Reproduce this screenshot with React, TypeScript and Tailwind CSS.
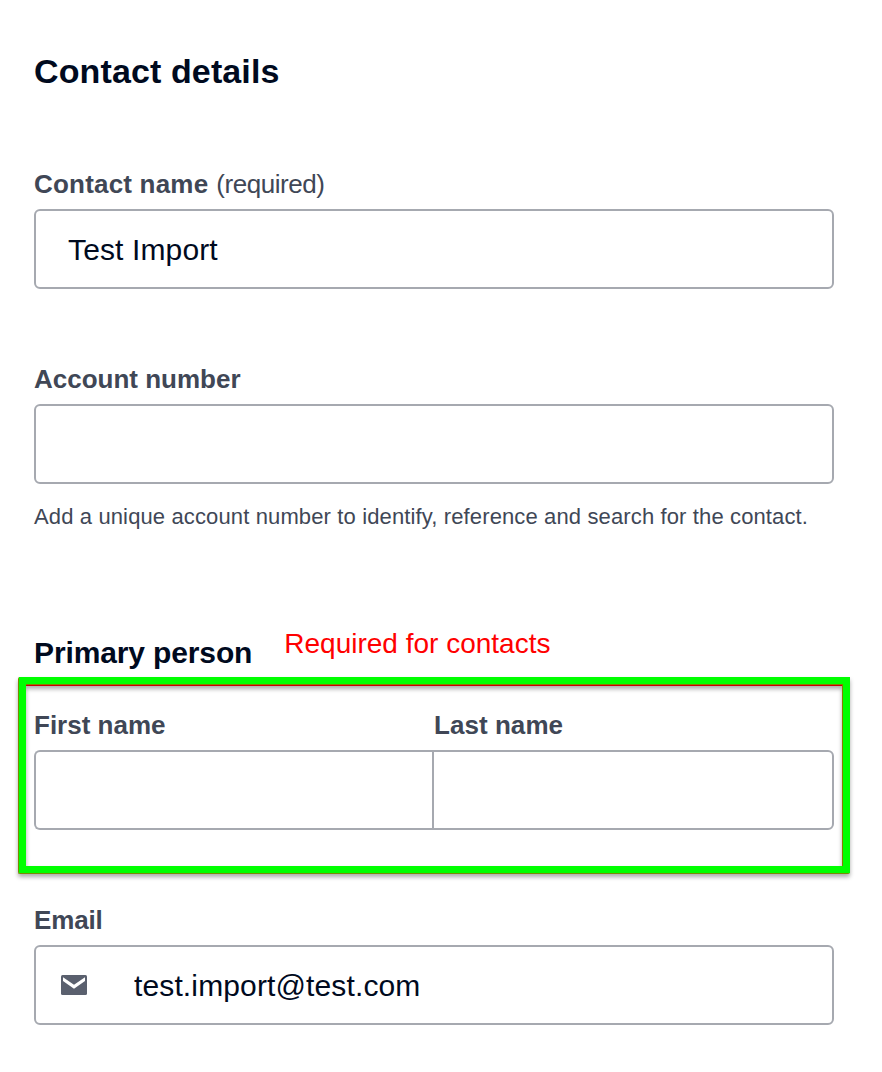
import type { ReactNode } from "react";
import { clsx } from "clsx";

const MailIcon = () => (
  <svg width="26" height="20" viewBox="0 0 26 20" aria-hidden>
    <rect width="26" height="20" rx="1.5" fill="#5a606e" />
    <path d="M2 2.3 L13 9.7 L24 2.3 V6 L13 13.8 L2 6 Z" fill="#fff" />
  </svg>
);

type FieldProps = {
  id: string;
  label: string;
  note?: string;
  value?: string;
  icon?: ReactNode;
  labelClassName?: string;
  inputClassName?: string;
};

const Field = ({
  id,
  label,
  note,
  value,
  icon,
  labelClassName,
  inputClassName,
}: FieldProps) => (
  <div className="flex flex-col">
    <label
      htmlFor={id}
      className={clsx(
        "flex h-[50px] items-center gap-2 text-[26px] font-bold text-[#404756]",
        labelClassName
      )}>
      {label}
      {note && <span className="font-normal tracking-[-0.45px]">{note}</span>}
    </label>
    <div
      className={clsx(
        "flex h-20 items-center border-2 border-[#a6a9b0] bg-white",
        inputClassName ?? "rounded-md"
      )}>
      {icon && <span className="flex w-[66px] shrink-0 pl-[25px]">{icon}</span>}
      <input
        id={id}
        type="text"
        defaultValue={value}
        className="h-full min-w-0 flex-1 bg-transparent px-8 pt-0.5 text-[30px] tracking-[0.13px] text-[#000a1e] outline-none"
      />
    </div>
  </div>
);

// Green box drawn over the name fields, with a thin red edge and a soft shadow
const Highlight = () => (
  <div className="pointer-events-none absolute -top-[23px] -left-4 h-[197px] w-[832px] rounded-[2px] border-b border-l border-[#7a8a00] drop-shadow-[0_3px_2px_rgba(0,0,0,0.33)]">
    <div className="h-full w-full border-7 border-[#00ff00]">
      <div className="h-full w-full border-t border-r border-t-[#8a7a00] border-r-[#8a7a00]">
        <div className="h-px w-full bg-[#c80000]" />
      </div>
    </div>
  </div>
);

const App = () => {
  return (
    <main className="h-[1072px] w-[882px] overflow-hidden bg-white pt-[50px] pl-[34px] font-['Liberation_Sans',Arial,sans-serif]">
      <form className="w-[800px]">
        <h1 className="h-[109px] text-[34px] leading-[42px] font-bold tracking-[0.12px] text-[#000a1e]">
          Contact details
        </h1>

        <Field
          id="name"
          label="Contact name"
          note="(required)"
          value="Test Import"
          labelClassName="tracking-[0.2px]"
        />

        <div className="mt-[65px]">
          <Field id="account" label="Account number" />
          <p className="mt-4 text-[22px] leading-[34px] tracking-[0.13px] whitespace-nowrap text-[#404756]">
            Add a unique account number to identify, reference and search for the contact.
          </p>
        </div>

        <div className="mt-[90px] flex h-[76px] items-start gap-8">
          <h2 className="mt-[9px] text-[30px] leading-[40px] font-bold tracking-[-0.13px] text-[#000a1e]">
            Primary person
          </h2>
          <span className="mt-0.5 text-[28px] leading-[36px] text-[#ff0000]">
            Required for contacts
          </span>
        </div>

        <div className="relative grid grid-cols-2">
          <Field id="first" label="First name" inputClassName="rounded-l-md border-r-0" />
          <Field
            id="last"
            label="Last name"
            labelClassName="tracking-[0.05px]"
            inputClassName="-ml-0.5 rounded-r-md"
          />
          <Highlight />
        </div>

        <div className="mt-[65px]">
          <Field
            id="email"
            label="Email"
            value="test.import@test.com"
            icon={<MailIcon />}
            labelClassName="tracking-[-0.15px]"
          />
        </div>
      </form>
    </main>
  );
};

export default App;
